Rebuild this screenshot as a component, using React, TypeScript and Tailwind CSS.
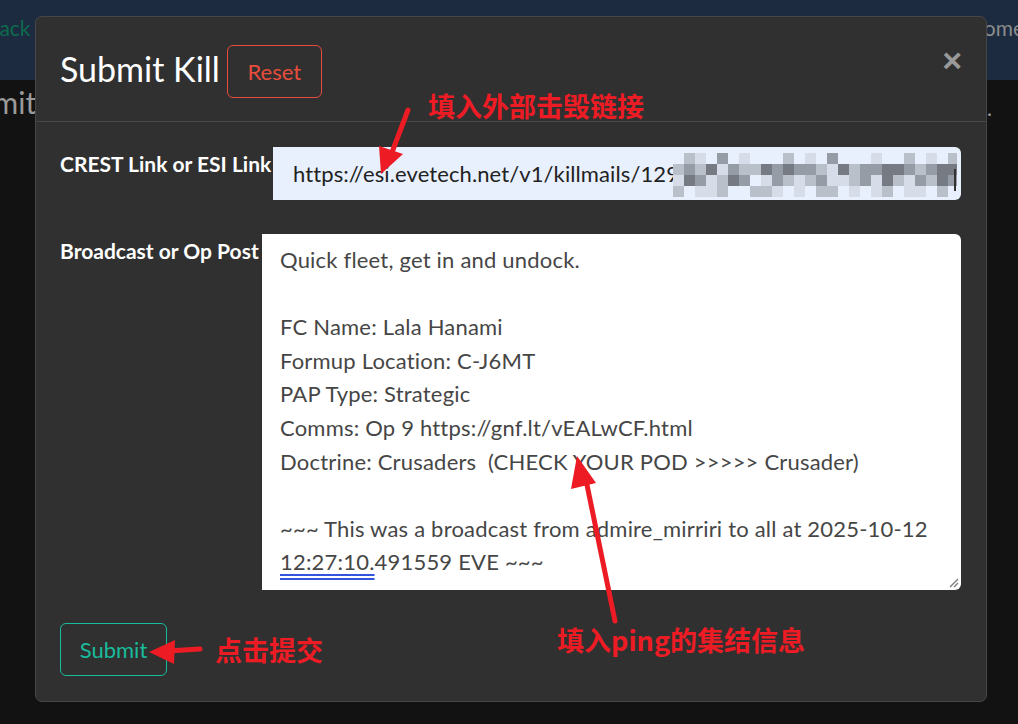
import React from "react"

const pixelRows = [
  "0210301000201030001002010200",
  "2324132243433214233443234400",
  "1431243013212311231421324300",
  "2011200221010220101201102000",
]

const shades = ["#e8f0fe", "#d6dde8", "#b9c0ca", "#969ca5", "#767b83"]

function Pixelated() {
  return (
    <svg className="absolute left-[400px] top-[6px]" width="284" height="44" viewBox="0 0 284 44">
      {pixelRows.map((row, r) =>
        row.split("").map((c, i) => (
          <rect key={`${r}-${i}`} x={i * 11} y={r * 11} width="11" height="11" fill={shades[Number(c)]} />
        ))
      )}
      <rect x="281" y="16" width="2" height="22" fill="#333" />
    </svg>
  )
}

function Arrows() {
  return (
    <svg className="pointer-events-none absolute inset-0" width="1018" height="724" viewBox="0 0 1018 724">
      <g stroke="#ed1c24" strokeWidth="5" strokeLinecap="round" fill="#ed1c24">
        <line x1="408" y1="110" x2="391" y2="155" />
        <polygon points="381,174 379,146 403,154" stroke="none" />
        <line x1="200" y1="649" x2="168" y2="651" />
        <polygon points="149,652 175,640 174,664" stroke="none" />
        <line x1="615" y1="621" x2="586" y2="480" />
        <polygon points="577,456 571,489 596,483" stroke="none" />
      </g>
    </svg>
  )
}

export default function App() {
  const post = [
    "Quick fleet, get in and undock.",
    "",
    "FC Name: Lala Hanami",
    "Formup Location: C-J6MT",
    "PAP Type: Strategic",
    "Comms: Op 9 https://gnf.lt/vEALwCF.html",
    "Doctrine: Crusaders  (CHECK YOUR POD >>>>> Crusader)",
    "",
    "~~~ This was a broadcast from admire_mirriri to all at 2025-10-12",
  ]

  return (
    <div className="relative h-[724px] w-[1018px] overflow-hidden bg-[#121212] font-['Lato','Liberation_Sans',sans-serif]">
      {/* page behind the dialog */}
      <div className="flex h-[80px] items-start justify-between bg-[#1c2b3f] pt-[12px] text-[21px]">
        <span className="-ml-[14px] text-[#0e6a4d]">Back</span>
        <span className="-mr-[6px] text-[#8c8c8c]">Home</span>
      </div>
      <div className="flex items-start justify-between">
        <span className="-ml-[56px] mt-[2px] text-[30px] leading-[40px] text-[#9a9a9a]">Submit</span>
        <span className="mr-[26px] mt-[12px] text-[21px] text-[#9a9a9a]">.</span>
      </div>

      {/* dialog */}
      <div className="absolute left-[35px] top-[16px] flex h-[686px] w-[952px] flex-col rounded-[7px] border border-[#474747] bg-[#303030]">
        <div className="flex h-[105px] items-center border-b border-[#474747] pl-[24px] pr-[24px]">
          <h4 className="text-[34px] leading-none text-white">Submit Kill</h4>
          <button className="ml-[7px] mt-[4px] h-[53px] w-[95px] rounded-[6px] border border-[#e74c3c] text-[22px] text-[#e74c3c]">
            Reset
          </button>
          <span className="ml-auto mt-[-18px] font-['Liberation_Sans',sans-serif] text-[34px] font-bold leading-none text-[#999]">
            ×
          </span>
        </div>

        <div className="flex flex-col pl-[24px] pr-[25px] pt-[25px]">
          <div className="flex">
            <label className="w-[213px] shrink-0 whitespace-nowrap pt-[2px] text-[21px] font-bold leading-[30px] text-white">
              CREST Link or ESI Link
            </label>
            <div className="relative flex h-[53px] flex-1 items-center rounded-r-[6px] bg-[#e8f0fe] pl-[20px] text-[22px] tracking-[0.1px] text-[#222]">
              https://esi.evetech.net/v1/killmails/129
              <Pixelated />
            </div>
          </div>

          <div className="mt-[34px] flex">
            <label className="w-[202px] shrink-0 whitespace-nowrap pt-[2px] text-[21px] font-bold leading-[30px] text-white">
              Broadcast or Op Post
            </label>
            <div className="relative h-[356px] flex-1 rounded-r-[6px] bg-white px-[18px] pt-[9px] text-[22px] leading-[33.6px] tracking-[0.2px] text-[#464646]">
              {post.map((line, i) => (
                <div key={i} className="h-[33.6px] whitespace-pre">
                  {line}
                </div>
              ))}
              <div className="h-[33.6px] whitespace-pre">
                <span className="underline decoration-[#3355dd] decoration-double underline-offset-[4px]">12:27:10.</span>
                491559 EVE ~~~
              </div>
              <svg className="absolute bottom-[2px] right-[2px]" width="12" height="12" viewBox="0 0 12 12">
                <path d="M11 3 L3 11 M11 7 L7 11" stroke="#777" strokeWidth="1.2" />
              </svg>
            </div>
          </div>

          <div className="mt-[33px]">
            <button className="h-[53px] w-[107px] rounded-[6px] border border-[#18bc9c] text-[22px] text-[#18bc9c]">
              Submit
            </button>
          </div>
        </div>
      </div>

      {/* annotations */}
      <div className="absolute left-[428px] top-[88px] font-['Noto_Sans_CJK_SC',sans-serif] text-[27px] font-bold leading-[36px] text-[#ed1c24]">
        填入外部击毁链接
      </div>
      <div className="absolute left-[215px] top-[632px] font-['Noto_Sans_CJK_SC',sans-serif] text-[27px] font-bold leading-[36px] text-[#ed1c24]">
        点击提交
      </div>
      <div className="absolute left-[557px] top-[622px] font-['Noto_Sans_CJK_SC',sans-serif] text-[27px] font-bold leading-[36px] text-[#ed1c24]">
        填入ping的集结信息
      </div>
      <Arrows />
    </div>
  )
}
